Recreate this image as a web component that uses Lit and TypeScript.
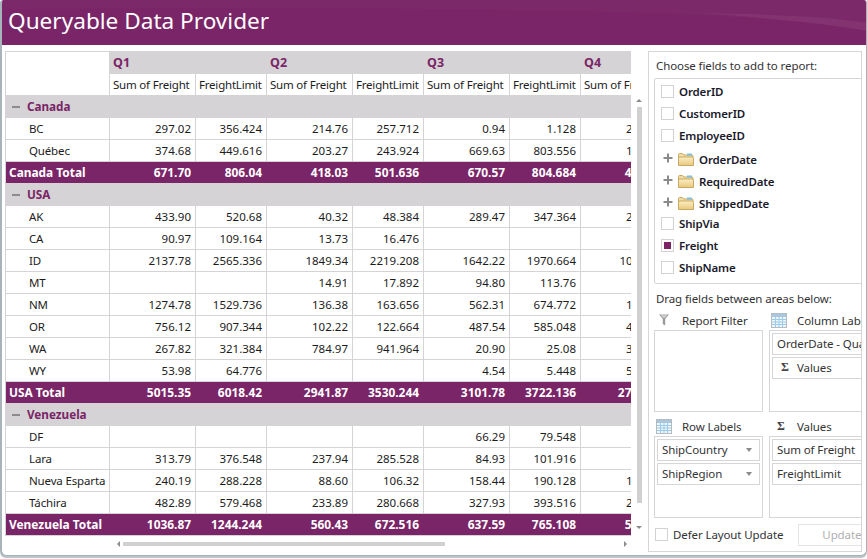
import { LitElement, html, css, svg } from "lit";
import { customElement } from "lit/decorators.js";

type Row = { t: "g" | "r" | "s"; l: string; v?: string[] };
const rows: Row[] = [
  { t: "g", l: "Canada" },
  { t: "r", l: "BC", v: ["297.02","356.424","214.76","257.712","0.94","1.128","214.50"] },
  { t: "r", l: "Québec", v: ["374.68","449.616","203.27","243.924","669.63","803.556","152.90"] },
  { t: "s", l: "Canada Total", v: ["671.70","806.04","418.03","501.636","670.57","804.684","467.40"] },
  { t: "g", l: "USA" },
  { t: "r", l: "AK", v: ["433.90","520.68","40.32","48.384","289.47","347.364","210.75"] },
  { t: "r", l: "CA", v: ["90.97","109.164","13.73","16.476","","",""] },
  { t: "r", l: "ID", v: ["2137.78","2565.336","1849.34","2219.208","1642.22","1970.664","1044.90"] },
  { t: "r", l: "MT", v: ["","","14.91","17.892","94.80","113.76",""] },
  { t: "r", l: "NM", v: ["1274.78","1529.736","136.38","163.656","562.31","674.772","126.60"] },
  { t: "r", l: "OR", v: ["756.12","907.344","102.22","122.664","487.54","585.048","412.30"] },
  { t: "r", l: "WA", v: ["267.82","321.384","784.97","941.964","20.90","25.08","318.25"] },
  { t: "r", l: "WY", v: ["53.98","64.776","","","4.54","5.448","514.20"] },
  { t: "s", l: "USA Total", v: ["5015.35","6018.42","2941.87","3530.244","3101.78","3722.136","2771.40"] },
  { t: "g", l: "Venezuela" },
  { t: "r", l: "DF", v: ["","","","","66.29","79.548",""] },
  { t: "r", l: "Lara", v: ["313.79","376.548","237.94","285.528","84.93","101.916",""] },
  { t: "r", l: "Nueva Esparta", v: ["240.19","288.228","88.60","106.32","158.44","190.128","135.60"] },
  { t: "r", l: "Táchira", v: ["482.89","579.468","233.89","280.668","327.93","393.516","242.70"] },
  { t: "s", l: "Venezuela Total", v: ["1036.87","1244.244","560.43","672.516","637.59","765.108","512.85"] },
];

const folder = svg`<svg class="folder" width="16" height="14" viewBox="0 0 16 14">
  <defs><linearGradient id="fg" x1="0" y1="0" x2="0" y2="1"><stop offset="0" stop-color="#fbeec4"/><stop offset="1" stop-color="#e9c77e"/></linearGradient></defs>
  <path d="M0.5 12.5V2.5a1 1 0 0 1 1-1h3l1.5 1.5h8a1 1 0 0 1 1 1v8.5z" fill="#f0dca6" stroke="#c9a961"/>
  <rect x="9" y="1.5" width="5" height="2" fill="#7cc0e6"/>
  <path d="M0.5 13.5V6.5l1-1.5h13l1 1.5v7z" fill="url(#fg)" stroke="#c9a961"/>
</svg>`;
const plus = svg`<svg class="plus" width="10" height="10" viewBox="0 0 10 10"><path d="M5 0.5v9M0.5 5h9" stroke="#8a8a8a" stroke-width="2"/></svg>`;
const gridIcon = svg`<svg width="16" height="15" viewBox="0 0 16 15">
  <rect x="0.5" y="0.5" width="15" height="14" fill="#eef5fb" stroke="#b4bcc2"/>
  <rect x="1" y="1" width="14" height="3" fill="#a9c6dd"/>
  <path d="M1 6.5h14M1 9h14M1 11.5h14M4.5 4v10M8 4v10M11.5 4v10" stroke="#9ccbe8" stroke-width="1"/>
</svg>`;
const funnel = svg`<svg width="10" height="12" viewBox="0 0 10 12"><path d="M0 0.5h10L6.2 5v6.5L3.8 10V5z" fill="#9a9a9a"/><path d="M1.5 1h7L6 4H4z" fill="#c9c9c9"/></svg>`;

@customElement("app-root")
export class AppRoot extends LitElement {
  static styles = css`
    :host { display: block; width: 867px; height: 559px; background: #fff; font-family: "Noto Sans", "Open Sans", sans-serif; font-size: 11.5px; color: #1c1c1c; }
    * { box-sizing: border-box; }
    .window { height: 556px; display: flex; flex-direction: column; background: #fff; border: 1px solid #a8b4ba; border-top: 0; border-width: 0 1px 1px 2px; border-radius: 3px 3px 6px 6px; box-shadow: 0 2px 1px #b9c2c6; overflow: hidden; }
    .header { flex: none; position: relative; height: 45px; margin-left: -2px; margin-right: -1px; background: #7a2567; color: #fff; display: flex; align-items: center; padding: 0 0 3px 8px; font-size: 22.6px; line-height: 30px; overflow: hidden; }
    .header svg { position: absolute; inset: 0; }
    .header span { position: relative; }
    .body { flex: 1; min-height: 0; display: flex; padding: 6px 0 0 3px; }
    .left { flex: none; width: 626px; display: flex; flex-direction: column; }
    .table { flex: none; height: 485px; overflow: hidden; border-left: 1px solid #d5d3d5; border-top: 1px solid #d5d3d5; }
    .row { display: grid; grid-template-columns: 104px 86px 71px 86px 71px 86px 71px 86px; width: 661px; height: 22px; line-height: 21px; white-space: nowrap; }
    .head { height: 44px; grid-template-rows: 22px 22px; }
    .corner { grid-row: 1 / span 2; border-right: 1px solid #d5d3d5; border-bottom: 1px solid #d5d3d5; }
    .q { grid-column: span 2; background: #d5d3d5; color: #7a2567; font-weight: 700; font-size: 12.5px; padding-left: 3px; }
    .q.last { grid-column: span 1; }
    .sub { padding-left: 3px; border-right: 1px solid #d5d3d5; border-bottom: 1px solid #d5d3d5; overflow: hidden; letter-spacing: -0.2px; }
    .group { display: flex; align-items: center; background: #d5d3d5; color: #7a2567; font-weight: 700; font-size: 11.7px; padding: 0 0 1px 6px; gap: 7px; width: 661px; height: 22px; line-height: 21px; }
    .minus { width: 8px; height: 2px; background: #8a8a8a; }
    .label { padding-left: 23px; border-right: 1px solid #d5d3d5; border-bottom: 1px solid #d5d3d5; letter-spacing: -0.15px; }
    .num { text-align: right; padding-right: 4px; border-right: 1px solid #d5d3d5; border-bottom: 1px solid #d5d3d5; }
    .total { background: #7a2567; color: #fff; font-weight: 700; font-size: 11.9px; border-bottom: 1px solid #d5d3d5; }
    .total .tl { padding-left: 3px; }
    .total .tn { text-align: right; padding-right: 5px; }
    .hscroll { flex: none; display: flex; align-items: center; height: 14px; margin-top: 1px; padding-left: 112px; padding-right: 4px; }
    .thumb-h { width: 322px; height: 4px; background: #d0d0d0; margin-left: 3px; }
    .spacer { flex: 1; }
    .tri-l { width: 0; height: 0; border: 3px solid transparent; border-left: 0; border-right: 3px solid #8a8a8a; }
    .tri-r { width: 0; height: 0; border: 3px solid transparent; border-right: 0; border-left: 3px solid #8a8a8a; }
    .vscroll { flex: none; width: 12px; margin-left: 2px; padding-top: 48px; display: flex; flex-direction: column; align-items: center; }
    .tri-u { width: 0; height: 0; border: 3px solid transparent; border-top: 0; border-bottom: 3px solid #8a8a8a; }
    .tri-d { width: 0; height: 0; border: 3px solid transparent; border-bottom: 0; border-top: 3px solid #8a8a8a; margin-top: 23px; }
    .thumb-v { width: 5px; height: 396px; background: #d0d0d0; margin-top: 5px; }
    .panel { flex: none; width: 214px; height: 501px; margin-left: 3px; border: 1px solid #d6d6d6; padding: 0 0 0 5px; overflow: hidden; display: flex; flex-direction: column; color: #333; letter-spacing: -0.1px; }
    .cap { flex: none; height: 22px; margin-top: 3px; padding-left: 2px; line-height: 22px; white-space: nowrap; }
    .list { flex: none; width: 212px; height: 206px; margin-top: 1px; border: 1px solid #d6d6d6; border-radius: 2px; padding: 1px 0 0 6px; }
    .field { display: flex; align-items: center; height: 22px; color: #1a1a2a; font-weight: 600; gap: 5px; letter-spacing: -0.15px; }
    .check { flex: none; width: 13px; height: 13px; border: 1px solid #d2d2d2; background: #fff; display: flex; align-items: center; justify-content: center; }
    .check i { width: 7px; height: 7px; background: #7a2567; display: block; }
    .tree { gap: 0; margin-top: 2px; margin-bottom: -2px; }
    .tree .plus { margin: -3px 0 0 2px; }
    .tree .folder { margin: 0 5px 0 5px; }
    .cap2 { flex: none; height: 20px; margin-top: 5px; padding-left: 2px; line-height: 20px; white-space: nowrap; }
    .areas { flex: none; width: 240px; display: grid; grid-template-columns: 109px 120px; column-gap: 6px; grid-template-rows: 21px 82px 24px 82px; }
    .ah { display: flex; align-items: center; white-space: nowrap; padding-top: 1px; }
    .ah.low { padding-top: 4px; }
    .ahi { flex: none; width: 28px; display: flex; justify-content: flex-start; padding-left: 2px; }
    .ahi.f { padding-left: 5px; }
    .sig { font-family: "Liberation Serif", serif; font-weight: 700; font-size: 12px; color: #444; padding-left: 6px; }
    .box { border: 1px solid #d6d6d6; padding: 2px; display: flex; flex-direction: column; gap: 2px; overflow: hidden; }
    .item { flex: none; display: flex; align-items: center; height: 22px; width: 103px; border: 1px solid #d6d6d6; padding: 0 4px 1px; white-space: nowrap; color: #333; }
    .wide { width: 115px; overflow: hidden; }
    .caret { margin-left: auto; margin-right: 3px; width: 0; height: 0; border: 3.5px solid transparent; border-bottom: 0; border-top: 4px solid #8a8a8a; }
    .item .sig { width: 24px; padding-left: 8px; flex: none; margin-left: -4px; }
    .foot { flex: 1; display: flex; align-items: center; margin-left: 1px; white-space: nowrap; }
    .foot .check { margin-right: 5px; }
    .btn { flex: none; width: 87px; height: 22px; margin-left: 15px; border: 1px solid #e4e4e4; color: #b0b0b0; text-align: center; line-height: 20px; }
  `;

  row(r: Row) {
    if (r.t === "g") return html`<div class="group"><span class="minus"></span><span>${r.l}</span></div>`;
    if (r.t === "s") return html`<div class="row total"><div class="tl">${r.l}</div>${r.v!.map((v) => html`<div class="tn">${v}</div>`)}</div>`;
    return html`<div class="row"><div class="label">${r.l}</div>${r.v!.map((v) => html`<div class="num">${v}</div>`)}</div>`;
  }

  field(n: string, on = false) {
    return html`<div class="field"><span class="check">${on ? html`<i></i>` : ""}</span><span>${n}</span></div>`;
  }
  tree(n: string) {
    return html`<div class="field tree">${plus}${folder}<span>${n}</span></div>`;
  }

  render() {
    const subs = ["Sum of Freight", "FreightLimit", "Sum of Freight", "FreightLimit", "Sum of Freight", "FreightLimit", "Sum of Freight"];
    return html`<div class="window">
      <div class="header">
        <svg width="867" height="45" viewBox="0 0 867 45"><path d="M0 0H867V31C760 12 560 6 0 9z" fill="#fff" fill-opacity=".02"/><path d="M700 13C770 18 830 24 867 31V23C830 17 770 14 700 13z" fill="#fff" fill-opacity=".05"/></svg>
        <span>Queryable Data Provider</span>
      </div>
      <div class="body">
        <div class="left">
          <div class="table">
            <div class="row head">
              <div class="corner"></div>
              <div class="q">Q1</div><div class="q">Q2</div><div class="q">Q3</div><div class="q last">Q4</div>
              ${subs.map((s) => html`<div class="sub">${s}</div>`)}
            </div>
            ${rows.map((r) => this.row(r))}
          </div>
          <div class="hscroll"><span class="tri-l"></span><span class="thumb-h"></span><span class="spacer"></span><span class="tri-r"></span></div>
        </div>
        <div class="vscroll"><span class="tri-u"></span><span class="thumb-v"></span><span class="tri-d"></span></div>
        <div class="panel">
          <div class="cap">Choose fields to add to report:</div>
          <div class="list">
            ${this.field("OrderID")}${this.field("CustomerID")}${this.field("EmployeeID")}
            ${this.tree("OrderDate")}${this.tree("RequiredDate")}${this.tree("ShippedDate")}
            ${this.field("ShipVia")}${this.field("Freight", true)}${this.field("ShipName")}
          </div>
          <div class="cap2">Drag fields between areas below:</div>
          <div class="areas">
            <div class="ah"><span class="ahi f">${funnel}</span>Report Filter</div>
            <div class="ah"><span class="ahi">${gridIcon}</span>Column Labels</div>
            <div class="box"></div>
            <div class="box">
              <div class="item wide">OrderDate - Quarter</div>
              <div class="item wide"><span class="sig">Σ</span>Values</div>
            </div>
            <div class="ah low"><span class="ahi">${gridIcon}</span>Row Labels</div>
            <div class="ah low"><span class="ahi"><span class="sig">Σ</span></span>Values</div>
            <div class="box">
              <div class="item">ShipCountry<span class="caret"></span></div>
              <div class="item">ShipRegion<span class="caret"></span></div>
            </div>
            <div class="box">
              <div class="item wide">Sum of Freight</div>
              <div class="item wide">FreightLimit</div>
            </div>
          </div>
          <div class="foot"><span class="check"></span>Defer Layout Update<span class="btn">Update</span></div>
        </div>
      </div>
    </div>`;
  }
}
